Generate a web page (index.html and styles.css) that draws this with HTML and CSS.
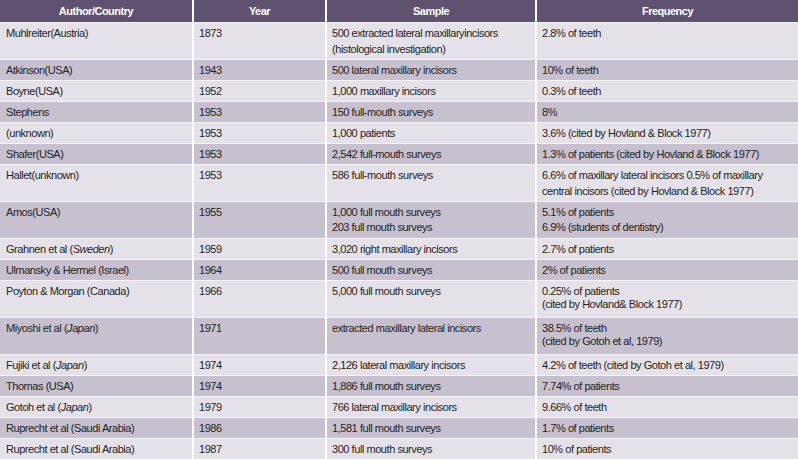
FILE: index.html
```html
<!DOCTYPE html>
<html lang="en">
<head>
<meta charset="utf-8">
<title>Prevalence table</title>
<link rel="stylesheet" href="styles.css">
</head>
<body>
<table class="data">
  <colgroup>
    <col class="c1"><col class="c2"><col class="c3"><col class="c4">
  </colgroup>
  <thead>
    <tr><th>Author/Country</th><th>Year</th><th>Sample</th><th>Frequency</th></tr>
  </thead>
  <tbody>
    <tr class="odd"><td>Muhlreiter(Austria)</td><td>1873</td><td>500 extracted lateral maxillaryincisors<br>(histological investigation)</td><td>2.8% of teeth</td></tr>
    <tr class="even"><td>Atkinson(USA)</td><td>1943</td><td>500 lateral maxillary incisors</td><td>10% of teeth</td></tr>
    <tr class="odd"><td>Boyne(USA)</td><td>1952</td><td>1,000 maxillary incisors</td><td>0.3% of teeth</td></tr>
    <tr class="even"><td>Stephens</td><td>1953</td><td>150 full-mouth surveys</td><td>8%</td></tr>
    <tr class="odd"><td>(unknown)</td><td>1953</td><td>1,000 patients</td><td>3.6% (cited by Hovland &amp; Block 1977)</td></tr>
    <tr class="even"><td>Shafer(USA)</td><td>1953</td><td>2,542 full-mouth surveys</td><td>1.3% of patients (cited by Hovland &amp; Block 1977)</td></tr>
    <tr class="odd"><td>Hallet(unknown)</td><td>1953</td><td>586 full-mouth surveys</td><td>6.6% of maxillary lateral incisors 0.5% of maxillary<br>central incisors (cited by Hovland &amp; Block 1977)</td></tr>
    <tr class="even mid"><td>Amos(USA)</td><td>1955</td><td>1,000 full mouth surveys<br>203 full mouth surveys</td><td>5.1% of patients<br>6.9% (students of dentistry)</td></tr>
    <tr class="odd"><td>Grahnen et al (<em>Sweden</em>)</td><td>1959</td><td>3,020 right maxillary incisors</td><td>2.7% of patients</td></tr>
    <tr class="even"><td>Ulmansky &amp; Hermel (Israel)</td><td>1964</td><td>500 full mouth surveys</td><td>2% of patients</td></tr>
    <tr class="odd tight"><td>Poyton &amp; Morgan (Canada)</td><td>1966</td><td>5,000 full mouth surveys</td><td>0.25% of patients<br>(cited by Hovland&amp; Block 1977)</td></tr>
    <tr class="even tight"><td>Miyoshi et al (<em>Japan</em>)</td><td>1971</td><td>extracted maxillary lateral incisors</td><td>38.5% of teeth<br>(cited by Gotoh et al, 1979)</td></tr>
    <tr class="odd"><td>Fujiki et al (<em>Japan</em>)</td><td>1974</td><td>2,126 lateral maxillary incisors</td><td>4.2% of teeth (cited by Gotoh et al, 1979)</td></tr>
    <tr class="even"><td>Thomas (USA)</td><td>1974</td><td>1,886 full mouth surveys</td><td>7.74% of patients</td></tr>
    <tr class="odd"><td>Gotoh et al (<em>Japan</em>)</td><td>1979</td><td>766 lateral maxillary incisors</td><td>9.66% of teeth</td></tr>
    <tr class="even"><td>Ruprecht et al (Saudi Arabia)</td><td>1986</td><td>1,581 full mouth surveys</td><td>1.7% of patients</td></tr>
    <tr class="odd"><td>Ruprecht et al (Saudi Arabia)</td><td>1987</td><td>300 full mouth surveys</td><td>10% of patients</td></tr>
  </tbody>
</table>
</body>
</html>
```

FILE: styles.css
```css
html, body {
  margin: 0;
  padding: 0;
  background: #ffffff;
}

.data {
  width: 798px;
  table-layout: fixed;
  border-collapse: separate;
  border-spacing: 0;
  font-family: "Liberation Sans", Arial, sans-serif;
  font-size: 11px;
  letter-spacing: -0.45px;
  color: #242424;
}

.c1 { width: 192px; }
.c2 { width: 133px; }
.c3 { width: 210px; }
.c4 { width: 263px; }

.data th {
  background: #5f5270;
  color: #ffffff;
  font-weight: bold;
  letter-spacing: -0.5px;
  text-align: center;
  height: 22px;
  padding: 0 5px;
  line-height: 16px;
  box-sizing: border-box;
}

.data th + th,
.data td + td {
  border-left: 2px solid #ffffff;
}

.data td {
  border-top: 1px solid #f4f3f6;
  padding: 2px 5px 2px 6px;
  line-height: 16px;
  vertical-align: top;
  text-align: left;
  white-space: nowrap;
}

.data td + td {
  padding-left: 5px;
}

.odd td { background: #e4e2e8; }
.even td { background: #c6c0cf; }

.mid td {
  line-height: 15px;
  padding-top: 3px;
  padding-bottom: 3px;
}

.tight td {
  line-height: 12.5px;
  padding-top: 4px;
  padding-bottom: 7px;
}

.data em { font-style: italic; }
```
